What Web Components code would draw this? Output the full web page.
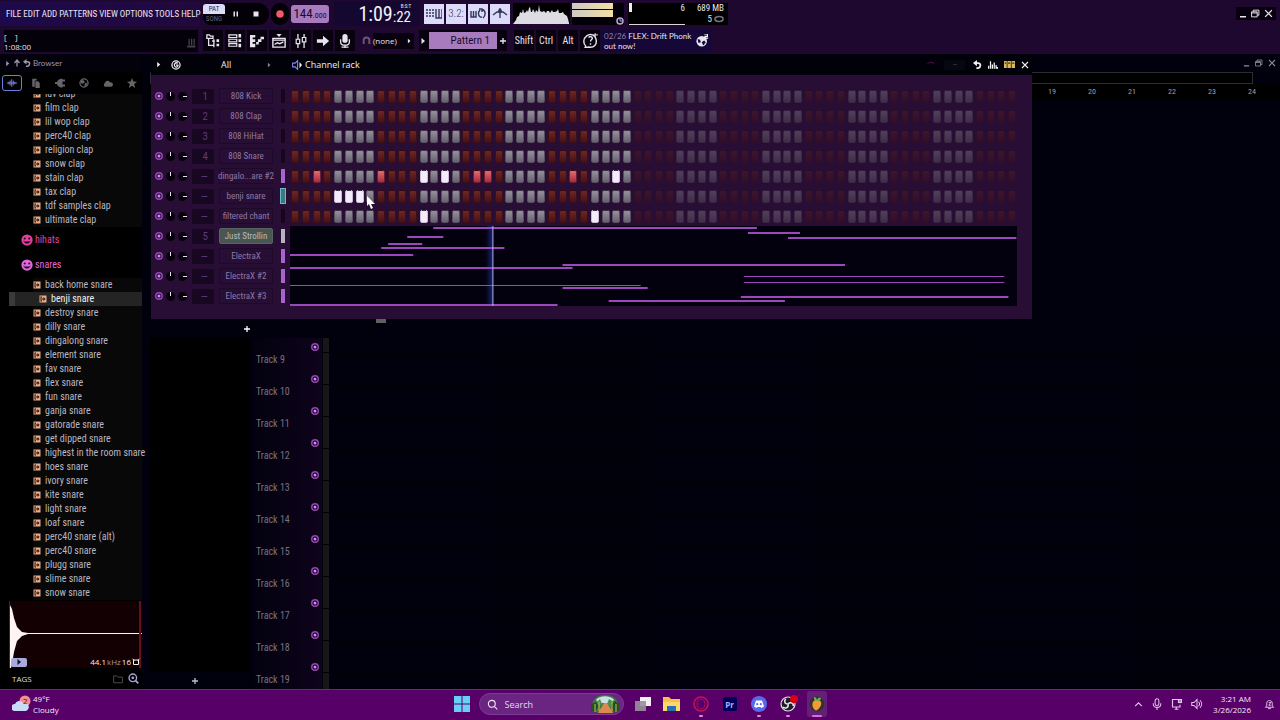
<!DOCTYPE html>
<html lang="en">
<head>
<meta charset="utf-8">
<title>Channel rack</title>
<style>
  body {
    margin: 0;
    background: #000;
    color: #ddd;
    font-family: "Roboto Condensed", "Roboto", sans-serif;
    font-size: 10px;
  }
</style>
</head>
<body>
<studio-app>
  <main-toolbar slot="toolbar"></main-toolbar>
  <sample-browser slot="browser"></sample-browser>
  <play-list slot="playlist"></play-list>
  <channel-rack slot="rack"></channel-rack>
  <task-bar slot="taskbar"></task-bar>
</studio-app>

<script>
const base = `
  * { box-sizing: border-box; }
  button, input, select {
    font: inherit; color: inherit; background: none; border: 0; padding: 0; margin: 0;
  }
  a { color: inherit; text-decoration: none; }
  svg { display: block; flex: none; }
`;

// 16x16 icons, drawn with currentColor
const icons = {
  right: '<path d="M5 2l7 6-7 6z" fill="currentColor"/>',
  up: '<path d="M8 15V4M3 8l5-6 5 6" fill="none" stroke="currentColor" stroke-width="2.5"/>',
  undo: '<path d="M7 0L0 5.500 7 11z" fill="currentColor"/><path d="M4 5.500h5c6 0 5 8 0 9H6" fill="none" stroke="currentColor" stroke-width="3.200"/>',
  wave: '<path d="M0 8h16M3 6v4M5 4v8M7.500 2v12M10 4v8M12.500 6v4" stroke="currentColor" stroke-width="1.400"/>',
  files: '<path d="M2 1h7v3H6v10H2z" fill="currentColor"/><path d="M7 5h4l3 3v8H7z" fill="currentColor"/>',
  plug: '<path d="M10 4h6M10 12h6M0 8h5" stroke="currentColor" stroke-width="3"/><path d="M12 1v14H9C5 14 3 11 3 8s2-6 6-7z" fill="currentColor"/>',
  globe: '<circle cx="8" cy="8" r="6.500" fill="none" stroke="currentColor" stroke-width="2"/><path d="M3 3l5 1 1 3-3 2-3-1zM9 9l4-2-1 5-3 2z" fill="currentColor"/>',
  cloud: '<path d="M3 14a3.500 3.500 0 0 1 0-6 4.500 4.500 0 0 1 8.500-1A3.500 3.500 0 0 1 13 14z" fill="currentColor"/>',
  star: '<path d="M8 0l2.200 5.500L16 6l-4.500 3.700L13 16l-5-3.500L3 16l1.500-6.300L0 6l5.800-.5z" fill="currentColor"/>',
  pause: '<path d="M3 3h3v10H3zM9 3h3v10H9z" fill="currentColor"/>',
  stop: '<path d="M3 3h10v10H3z" fill="currentColor"/>',
  rec: '<circle cx="8" cy="8" r="6" fill="#f25a66"/>',
  tree: '<path d="M1 1h3l1 1.500h3V5H1zM3 5v8h6M7 8h3M9 6v9" fill="none" stroke="currentColor" stroke-width="1.500"/><path d="M12 6h3v3h-3zM12 11h3v3h-3z" fill="currentColor"/>',
  rack: '<path d="M1 1h9v3H1zM1 6h9v3H1zM1 11h9v3H1z" fill="none" stroke="currentColor" stroke-width="1.400"/><path d="M12 0h3v4h-3zM12 6h3v3h-3zM12 11h3v4h-3z" fill="currentColor"/>',
  roll: '<path d="M0 1h6v3H3v2h3v3H3v2h3v4H0zM7 9h3v3H7zM9 6h4v3H9zM12 3h4v3h-4z" fill="currentColor"/>',
  play: '<path d="M5 0h6L8 3.500z" fill="currentColor"/><path d="M1 5h14v10H1zM1 7h14" fill="none" stroke="currentColor" stroke-width="1.600"/><path d="M3 12l3-2 3 1 4-2" fill="none" stroke="currentColor" stroke-width="1.600"/>',
  mixer: '<path d="M4.500 0v16M11.500 0v16" stroke="currentColor" stroke-width="1.500"/><path d="M2.500 6h4v5h-4zM9.500 4h4v5h-4z" fill="#08010e" stroke="currentColor" stroke-width="1.400"/>',
  arrow: '<path d="M1 6h7V2l7 6-7 6v-4H1z" fill="currentColor"/>',
  mic: '<rect x="5" y="0" width="6" height="10" rx="3" fill="currentColor"/><path d="M3 6v3c0 5 10 5 10 0V6M8 13v3M4 15h8" fill="none" stroke="currentColor" stroke-width="1.500"/>',
  magnet: '<path d="M3 14V7c0-6 10-6 10 0v7" fill="none" stroke="currentColor" stroke-width="3.500"/>',
  plus: '<path d="M8 2v12M2 8h12" stroke="currentColor" stroke-width="2.600"/>',
  keys: '<path d="M0 4h9M0 7h9M0 10h9" stroke="currentColor" stroke-width="1.600" stroke-dasharray="2 1"/><path d="M10 3v9h6V3M13 3v9" fill="none" stroke="currentColor" stroke-width="1.400"/>',
  loop: '<path d="M1 5v6h5V5M3.500 5v6" fill="none" stroke="currentColor" stroke-width="1.400"/><path d="M10 4c-3 3-1 8 2 7M12 3c4 2 4 6 1 9M9 3h3v3" fill="none" stroke="currentColor" stroke-width="1.400"/>',
  slide: '<path d="M8 2v10M1 9l4-3h6l4 3" fill="none" stroke="currentColor" stroke-width="1.400"/><circle cx="8" cy="5" r="2" fill="currentColor"/>',
  help: '<path d="M3 14l-1 2 4-1c6 1 9-3 8-8S8 0 4 3s-4 8-1 11zM6 5c1-2 4-1 4 .5S8 7 8 9M8 11v1.500" fill="none" stroke="currentColor" stroke-width="1.500"/><path d="M13 0v4M11 2h5" stroke="currentColor"/>',
  world: '<circle cx="7" cy="9" r="6.500" fill="currentColor"/><path d="M2 6l3 1 1 3-3 1zM7 10l3-2 2 2-3 4z" fill="#120840"/><path d="M10 0h4v3h-3v2h4" fill="none" stroke="#fff" stroke-width="1.400"/>',
  min: '<path d="M2 12h12v3H2z" fill="currentColor"/>',
  restore: '<path d="M1 5h10v9H1zM4 5V2h10v9h-3M1 7h10" fill="none" stroke="currentColor" stroke-width="1.700"/>',
  close: '<path d="M2 2l12 12M14 2L2 14" stroke="currentColor" stroke-width="2.200"/>',
  gauge: '<circle cx="8" cy="8" r="6" fill="none" stroke="currentColor" stroke-width="3"/><path d="M8 8V3M8 8h4" stroke="currentColor" stroke-width="2"/>',
  target: '<circle cx="8" cy="8" r="6.500" fill="none" stroke="currentColor" stroke-width="2"/><path d="M11 5c-4-2-7 2-5 5s6 1 5-2H8" fill="none" stroke="currentColor" stroke-width="2"/>',
  speaker: '<path d="M1 5h4l4-4v14l-4-4H1z" fill="none" stroke="#8088ff" stroke-width="1.700"/><path d="M12 3l4 5-4 5z" fill="currentColor"/>',
  bars: '<path d="M1 14V9M4 14V2M7 14V7M10 14V4M13 14V8M15 14v-3" stroke="currentColor" stroke-width="2"/>',
  steps: '<path d="M0 3h4v10H0zM5 3h5v10H5zM11 3h5v10h-5z" fill="currentColor"/><path d="M1 6h2M6 6h3M12 6h3" stroke="#402c00" stroke-width="1.500"/>',
  led: '<circle cx="8" cy="8" r="6.500" fill="none" stroke="#9446b4" stroke-width="3"/><circle cx="8" cy="8" r="3" fill="#d28af0"/>',
  sample: '<path d="M1 1h14v14H1z" fill="#e8aa88"/><path d="M3 3h3v2H5v6h1v2H3zM6 7h3V4l4 4-4 4V9H6z" fill="#2a1408"/>',
  smile: '<circle cx="8" cy="8" r="7.500" fill="currentColor"/><circle cx="5" cy="6" r="1.400" fill="#200818"/><circle cx="11" cy="6" r="1.400" fill="#200818"/><path d="M3 9c2 5 8 5 10 0l-2 1H5z" fill="#200818"/>',
  folder: '<path d="M1 3h5l2 2h7v9H1z" fill="none" stroke="currentColor" stroke-width="1.400"/>',
  zoom: '<circle cx="7" cy="7" r="5.500" fill="none" stroke="currentColor" stroke-width="2"/><path d="M11 11l4 4" stroke="currentColor" stroke-width="2.500"/><circle cx="7" cy="7" r="2" fill="currentColor"/>',
  chevron: '<path d="M2 11l6-6 6 6" fill="none" stroke="currentColor" stroke-width="2"/>',
  trayMic: '<rect x="5.500" y="1" width="5" height="9" rx="2.500" fill="none" stroke="currentColor" stroke-width="1.400"/><path d="M3 7v1c0 6 10 6 10 0V7M8 13v3" fill="none" stroke="currentColor" stroke-width="1.400"/>',
  net: '<path d="M10 2H2v10h10V9M5 15h5M7 12v3M12 2v5M10 2h4v4h-4z" fill="none" stroke="currentColor" stroke-width="1.500"/>',
  sound: '<path d="M1 6h3l4-4v12l-4-4H1zM10 5c2 2 2 4 0 6M12 3c3 3 3 7 0 10" fill="none" stroke="currentColor" stroke-width="1.400"/>',
  bell: '<path d="M2 12h12l-2-2V6c0-5-8-5-8 0v4zM6 14h4M7 5h3l-3 4h3" fill="none" stroke="currentColor" stroke-width="1.400"/>',
  search: '<circle cx="7" cy="7" r="5" fill="none" stroke="currentColor" stroke-width="1.600"/><path d="M11 11l4 4" stroke="currentColor" stroke-width="1.600"/>',
  shape: '<path d="M3 4h10v9H3zM1 2l4 3M15 2l-4 3" fill="none" stroke="currentColor" stroke-width="2"/>',
  metro: '<path d="M4 1h2v10H4zM8 1h2v10H8zM12 1h2v10h-2zM2 12h13v3H2z" fill="currentColor"/>',
  ring: '<ellipse cx="8" cy="8" rx="6.500" ry="4" fill="none" stroke="currentColor" stroke-width="2.500"/>'
};

const icon = (name, size = 12) =>
  `<svg width="${size}" height="${size}" viewBox="0 0 16 16" aria-hidden="true">${icons[name]}</svg>`;

class StudioElement extends HTMLElement {
  constructor() {
    super();
    this.attachShadow({ mode: 'open' });
  }

  connectedCallback() {
    this.shadowRoot.innerHTML = `<style>${base}${this.styles()}</style>${this.markup()}`;
  }

  styles() { return ''; }
  markup() { return ''; }
}

class StudioApp extends StudioElement {
  styles() {
    return `
      :host {
        display: grid;
        grid-template: auto minmax(0, 1fr) auto / auto minmax(0, 1fr);
        height: 100vh;
        overflow: hidden;
      }
      .toolbar, .taskbar { grid-column: 1 / -1; }
      .browser { display: flex; min-height: 0; }
      .desktop { position: relative; display: flex; min-height: 0; }
      /* the rack floats over the playlist */
      .rack { position: absolute; top: 0; left: 1px; width: 78%; }
    `;
  }

  markup() {
    return `
      <div class="toolbar"><slot name="toolbar"></slot></div>
      <div class="browser"><slot name="browser"></slot></div>
      <div class="desktop">
        <slot name="playlist"></slot>
        <div class="rack"><slot name="rack"></slot></div>
      </div>
      <div class="taskbar"><slot name="taskbar"></slot></div>
    `;
  }
}

class MainToolbar extends StudioElement {
  styles() {
    return `
      :host { display: block; background: #1e0830; color: #e8e4ee; height: 54px; }
      .row { display: flex; align-items: center; height: 27px; }
      .menu {
        display: flex; align-items: center; gap: 2px; width: 200px; height: 25px; padding-left: 6px;
        background: linear-gradient(90deg, #1c0a4c, #22083c); font-size: 9px;
      }
      .menu button { white-space: nowrap; }
      .transport {
        display: flex; align-items: center; gap: 7px; width: 66px; height: 22px; margin-left: 3px;
        background: #040008; border-radius: 8px 11px 11px 8px;
      }
      .mode { display: grid; width: 22px; height: 20px; font-size: 7px; line-height: 10px; text-align: center; }
      .mode button:first-child { background: #dcdcfa; color: #302850; border-radius: 3px 3px 0 0; }
      .mode button:last-child { color: #675f70; }
      .transport > button { width: 13px; }
      .record { display: grid; place-items: center; width: 18px; height: 22px; margin: 0 2px; background: #040008; border-radius: 9px; }
      .tempo { width: 38px; height: 18px; background: #a77bbd; color: #1c0a28; border-radius: 3px; font-size: 13px; line-height: 18px; text-align: center; }
      .tempo small { font-size: 8px; }
      .clock { display: flex; align-items: flex-end; justify-content: flex-end; width: 86px; height: 25px; margin: 0 4px 0 5px; background: #150830; font-size: 20px; line-height: 24px; padding-right: 9px; color: #f4f2f8; }
      .clock div { display: grid; justify-items: end; }
      .clock small { font-size: 15px; line-height: 17px; }
      .clock sup { font-size: 5px; line-height: 6px; }
      .tiles { display: flex; gap: 2px; }
      .tiles button { display: grid; place-items: center; width: 20px; height: 20px; background: #dcdcfa; color: #34345c; font-size: 11px; font-weight: 300; }
      .scope { margin-left: 3px; background: #000; }
      .meter { display: flex; flex-direction: column; gap: 1px; margin-left: 2px; width: 52px; height: 22px; background: #04000a; }
      .meter i { width: 41px; height: 7px; background: linear-gradient(90deg, #cfcac2, #f2dfa4); }
      .meter svg { align-self: flex-end; color: #b8a8d4; margin-top: -1px; }
      .usage { display: grid; grid-template-columns: 56px 1fr; width: 100px; height: 22px; margin-left: 4px; padding: 0 4px 0 1px; background: #000; font-size: 9px; line-height: 11px; text-align: right; }
      .graph { display: flex; justify-content: space-between; grid-row: span 2; border-bottom: 1px solid #d8d8d8; }
      .graph i { width: 3px; height: 9px; background: #eee; }
      .count { display: flex; align-items: center; justify-content: flex-end; gap: 2px; }
      .count svg { color: #77737c; }
      .window { display: flex; gap: 4px; height: 13px; margin: 0 4px 0 auto; padding: 0 3px; align-items: center; background: #08000e; }
      .hint { display: flex; justify-content: space-between; align-items: flex-end; width: 194px; height: 22px; margin: 0 5px 0 4px; padding-right: 2px; background: #04010a; font: 8px/10px "Open Sans", sans-serif; }
      .hint svg { color: #444; margin-bottom: 4px; }
      .views { display: flex; gap: 2px; }
      .views button, .keys button { display: grid; place-items: center; width: 20px; height: 21px; background: #08010e; }
      .snap { display: flex; align-items: center; gap: 2px; margin-left: 7px; font: 8px "Open Sans", sans-serif; }
      .snap > svg { color: #665870; }
      .snap button { display: flex; align-items: center; justify-content: space-between; width: 41px; height: 16px; padding: 0 2px 0 0; background: #08010e; }
      .pattern { display: flex; align-items: center; margin: 0 7px 0 5px; background: #08010e; height: 21px; }
      .pattern .name { width: 68px; height: 17px; margin: 0 2px; padding-right: 7px; background: #a77bbd; color: #1c0a28; text-align: right; font-size: 11px; }
      .keys { display: flex; gap: 2px; font-size: 10px; }
      .news { display: flex; align-items: center; justify-content: space-between; width: 110px; height: 22px; margin-left: 1px; padding: 0 2px 0 3px; background: #150838; font: 8px/10px Lato, sans-serif; white-space: nowrap; }
      .news span { color: #8f84a8; }
    `;
  }

  markup() {
    const menu = ['FILE', 'EDIT', 'ADD', 'PATTERNS', 'VIEW', 'OPTIONS', 'TOOLS', 'HELP'];
    const views = ['tree', 'rack', 'roll', 'play', 'mixer', 'arrow', 'mic'];
    return `
      <div class="row">
        <nav class="menu">${menu.map(m => `<button>${m}</button>`).join('')}</nav>
        <div class="transport">
          <div class="mode"><button>PAT</button><button>SONG</button></div>
          <button aria-label="Pause">${icon('pause', 8)}</button>
          <button aria-label="Stop">${icon('stop', 8)}</button>
        </div>
        <button class="record" aria-label="Record">${icon('rec', 10)}</button>
        <button class="tempo">144<small>.000</small></button>
        <div class="clock"><span>1:09</span><div><sup>B:S:T</sup><small>:22</small></div></div>
        <div class="tiles">
          <button aria-label="Typing keyboard">${icon('keys', 16)}</button>
          <button>3.2:</button>
          <button aria-label="Loop record">${icon('loop', 16)}</button>
          <button aria-label="Slide">${icon('slide', 16)}</button>
        </div>
        <svg class="scope" width="57" height="21" viewBox="0 0 57 21" aria-hidden="true">
          <path fill="#dcdce2" d="M0 21l3-4 1-3 2-1 1-4 2 1 1-4 1 4 2-1 1-2 1 2 1-4 1-1 1 5 1 0 1-3 2 4 1-3 2 2 1-7 1 6 2 1 2-1 2 2 1-2 2 0 1 2 2-3 1 2 2 0 2-1 1-2 1 4 2 0 2-1 1 2 3 2 1 3 1 4v3z"/>
        </svg>
        <div class="meter"><i></i><i></i>${icon('gauge', 8)}</div>
        <div class="usage">
          <div class="graph"><i></i><span>6</span></div>
          <span>689 MB</span>
          <span class="count">5${icon('ring', 10)}</span>
        </div>
        <div class="window">
          <button aria-label="Minimize">${icon('min', 8)}</button>
          <button aria-label="Restore">${icon('restore', 9)}</button>
          <button aria-label="Close">${icon('close', 9)}</button>
        </div>
      </div>
      <div class="row">
        <div class="hint"><div>[ &nbsp; &nbsp;]<br>1:08:00</div>${icon('metro', 10)}</div>
        <div class="views">${views.map(v => `<button aria-label="${v}">${icon(v, 14)}</button>`).join('')}</div>
        <div class="snap">${icon('magnet', 9)}<button>(none)${icon('right', 6)}</button></div>
        <div class="pattern">${icon('right', 8)}<button class="name">Pattern 1</button>${icon('plus', 8)}</div>
        <div class="keys">
          <button>Shift</button><button>Ctrl</button><button>Alt</button>
          <button aria-label="Help">${icon('help', 15)}</button>
        </div>
        <a class="news" href="#news"><div><span>02/26</span> FLEX: Drift Phonk<br>out now!</div>${icon('world', 13)}</a>
      </div>
    `;
  }
}

class SampleItem extends StudioElement {
  styles() {
    return `
      :host { display: block; flex: none; padding-left: 33px; }
      button { display: flex; align-items: center; gap: 4px; width: 100%; height: 14px; line-height: 14px; background: #080808; color: #bab6c0; white-space: nowrap; }
      :host([selected]) { padding-left: 9px; }
      :host([selected]) button { padding-left: 24px; border-left: 6px solid #3a3a3a; background: #242424; color: #f0f0f0; }
    `;
  }

  markup() {
    return `<button>${icon('sample', 8)}<slot></slot></button>`;
  }
}

class SampleBrowser extends StudioElement {
  styles() {
    return `
      :host { display: flex; flex-direction: column; width: 142px; min-height: 0; padding-right: 8px; background: linear-gradient(270deg, #01010d 8px, #000 8px); }
      header { display: flex; align-items: center; gap: 2px; height: 18px; padding-left: 4px; background: #02010c; color: #9c98a4; font: 8px Lato, sans-serif; }
      nav { display: flex; align-items: center; gap: 4px; height: 21px; padding-left: 2px; color: #67656c; }
      nav button { display: grid; place-items: center; width: 20px; height: 16px; border-radius: 3px; }
      nav button:first-child { border: 1px solid #6a7ee0; color: #7e8cf8; }
      /* long names run on into the gutter */
      .list { display: flex; flex-direction: column; justify-content: flex-end; flex: 1; min-height: 0; margin: 1px -8px 0 0; padding-right: 8px; overflow: hidden; }
      .folder { display: flex; flex: none; align-items: center; gap: 2px; height: 25px; padding-left: 21px; color: #e0409c; }
      .folder:nth-of-type(2) { color: #e068dc; }
      .folder + sample-item { margin-top: 1px; }
      .preview { position: relative; height: 67px; margin: 1px 0 0 9px; border-left: 1px solid #70101c; background: #120002; }
      .preview svg.shape { width: 100%; height: 100%; }
      .preview div { position: absolute; inset: auto 2px 0 1px; display: flex; align-items: center; justify-content: space-between; height: 12px; font: 8px/12px "Open Sans", sans-serif; color: #f0f0f0; }
      .preview button { display: grid; place-items: center; width: 16px; height: 9px; border-radius: 2px; background: #a9aadc; color: #101030; }
      .preview span { display: flex; align-items: center; gap: 1px; }
      .preview em { font-style: normal; color: #a0989c; }
      footer { display: flex; align-items: center; gap: 5px; height: 21px; padding: 0 3px 0 12px; font: 8px "Open Sans", sans-serif; color: #ddd; }
      footer span { margin-right: auto; }
      footer svg:first-of-type { color: #55505a; }
      footer svg:last-of-type { color: #a0a6d4; }
    `;
  }

  markup() {
    const claps = ['luv clap', 'film clap', 'lil wop clap', 'perc40 clap', 'religion clap', 'snow clap', 'stain clap', 'tax clap', 'tdf samples clap', 'ultimate clap'];
    const snares = ['back home snare', 'benji snare', 'destroy snare', 'dilly snare', 'dingalong snare', 'element snare', 'fav snare', 'flex snare', 'fun snare', 'ganja snare', 'gatorade snare', 'get dipped snare', 'highest in the room snare', 'hoes snare', 'ivory snare', 'kite snare', 'light snare', 'loaf snare', 'perc40 snare (alt)', 'perc40 snare', 'plugg snare', 'slime snare', 'snow snare'];
    const items = names => names.map(n =>
      `<sample-item${n === 'benji snare' ? ' selected' : ''}>${n}</sample-item>`).join('');
    const tabs = ['wave', 'files', 'plug', 'globe', 'cloud', 'star'];
    return `
      <header>${icon('right', 7)}${icon('up', 8)}${icon('undo', 8)}<span>Browser</span></header>
      <nav>${tabs.map(t => `<button aria-label="${t}">${icon(t, 10)}</button>`).join('')}</nav>
      <div class="list">
        ${items(claps)}
        <div class="folder">${icon('smile', 12)}hihats</div>
        <div class="folder">${icon('smile', 12)}snares</div>
        ${items(snares)}
      </div>
      <div class="preview">
        <svg class="shape" viewBox="0 0 132 67" preserveAspectRatio="none" aria-hidden="true">
          <path d="M0 4l2 4 2 9 3 9 5 5 6 1h114v1H18l-6 2-5 5-3 11-2 12-2 8z" fill="#fff4f4"/>
          <path d="M129 0h2v67h-2z" fill="#6a0e18"/>
        </svg>
        <div><button aria-label="Play">${icon('right', 8)}</button><span>44.1 <em>kHz</em> 16 ${icon('shape', 8)}</span></div>
      </div>
      <footer><span>TAGS</span>${icon('folder', 10)}${icon('zoom', 11)}</footer>
    `;
  }
}

class PlayList extends StudioElement {
  styles() {
    return `
      :host { display: flex; flex: 1; flex-direction: column; min-width: 0; background: #01010d; }
      header { display: flex; justify-content: flex-end; gap: 5px; align-items: center; height: 18px; padding-right: 4px; color: #8c8894; }
      .scroll { height: 12px; margin-right: 27px; border: 1px solid #2c2c34; background: #000; }
      .ruler { display: flex; justify-content: flex-end; height: 15px; padding-right: 8px; background: #000; color: #a09ca6; line-height: 15px; font-size: 8px; }
      .ruler span { width: 40px; text-align: center; }
      .head { display: flex; justify-content: center; align-items: flex-end; width: 194px; height: 239px; padding-bottom: 5px; color: #fff; }
      .body { display: flex; flex: 1; min-height: 0; }
      .picker { display: flex; flex-direction: column; width: 100px; }
      .picker div { flex: 1; background: #000; }
      .picker button { display: grid; place-items: center; height: 17px; padding-right: 10px; color: #b8c4d0; }
      .tracks { width: 68px; margin-left: 4px; overflow: hidden; background: linear-gradient(90deg, #03010e, #0e041c); }
      .track { display: flex; justify-content: space-between; height: 32px; padding: 0 3px 0 2px; line-height: 14px; color: #77727e; }
      .track button { align-self: flex-end; padding-bottom: 2px; }
      .track:first-child { height: 15px; }
      .mutes { width: 10px; overflow: hidden; padding: 0 3px 0 1px; }
      .mutes i { display: block; height: 31px; margin-bottom: 1px; background: #171618; }
      .mutes i:first-child { height: 14px; }
      .grid {
        flex: 1;
        background:
          repeating-linear-gradient(180deg, transparent 0 14px, #000006 14px 15px, transparent 15px 32px),
          repeating-linear-gradient(90deg, #01010d 0 160px, #01010b 160px 320px);
      }
    `;
  }

  markup() {
    const tracks = ['', 'Track 9', 'Track 10', 'Track 11', 'Track 12', 'Track 13', 'Track 14', 'Track 15', 'Track 16', 'Track 17', 'Track 18', 'Track 19'];
    return `
      <header>${icon('min', 7)}${icon('restore', 8)}${icon('close', 8)}</header>
      <div class="scroll"></div>
      <div class="ruler">${[19, 20, 21, 22, 23, 24].map(n => `<span>${n}</span>`).join('')}</div>
      <div class="head"><button aria-label="Add track">${icon('plus', 8)}</button></div>
      <div class="body">
        <div class="picker"><div></div><button aria-label="Add pattern">${icon('plus', 8)}</button></div>
        <div class="tracks">
          ${tracks.map(t => `<div class="track"><span>${t}</span><button aria-label="Mute">${icon('led', 8)}</button></div>`).join('')}
        </div>
        <div class="mutes">${tracks.map(() => '<i></i>').join('')}</div>
        <div class="grid"></div>
      </div>
    `;
  }
}

class ChannelStrip extends StudioElement {
  styles() {
    return `
      :host { display: flex; align-items: center; height: 20px; }
      .knob { display: grid; place-items: start center; width: 9px; height: 9px; margin-left: 3px; border-radius: 50%; background: #08020e; }
      .knob::after { content: ""; width: 1px; height: 4px; background: #e4e0ea; }
      .vol { place-items: center end; }
      .vol::after { width: 4px; height: 1px; }
      .track { width: 22px; height: 15px; margin-left: 5px; padding-right: 6px; background: #170720; color: #5d3a7c; text-align: right; font-size: 11px; line-height: 15px; border-radius: 2px; }
      .name { display: flex; justify-content: center; align-items: center; width: 54px; height: 16px; margin-left: 5px; border: 1px solid #1d0a28; background: #260e34; color: #9079a4; border-radius: 2px; white-space: nowrap; font-size: 9px; }
      .select { width: 4px; height: 14px; margin-left: 8px; background: #16071e; }
      :host([lit]) .select { background: #a565cc; }
      :host([tone="white"]) .select { background: #b8b2c0; }
      :host([tone="cyan"]) .select { background: #3c7880; outline: 1px solid #70b8c8; }
      :host([tone="white"]) .name { background: #4a5652; color: #b4bcb8; border-color: #566460; }
    `;
  }

  markup() {
    return `
      <button aria-label="Mute">${icon('led', 8)}</button>
      <button class="knob" aria-label="Pan"></button>
      <button class="knob vol" aria-label="Volume"></button>
      <button class="track" aria-label="Mixer track">${this.getAttribute('track') || '—'}</button>
      <button class="name"><slot></slot></button>
      <button class="select" aria-label="Select"></button>
    `;
  }
}

class StepRow extends StudioElement {
  styles() {
    return `
      :host { display: grid; grid-template-columns: repeat(68, 1fr); align-items: center; justify-items: center; height: 20px; }
      button { width: 8px; height: 13px; border: 1px solid #3c1018; border-radius: 2px; background: linear-gradient(#6c2824, #481018); }
      button::before { content: ""; display: block; width: 4px; height: 1px; margin: -6px auto 0; background: #38080c; }
      .alt { border-color: #57505f; background: linear-gradient(#97919f, #67616f); }
      .alt::before { background: #38303f; }
      .on { background: linear-gradient(#e06c70, #a82c3c); border-color: #70202c; }
      .alt.on { background: #f4ecfa; border-color: #c8bcd4; }
      .off { opacity: 0.3; }
      .off.alt { opacity: 0.38; }
    `;
  }

  markup() {
    const on = (this.getAttribute('on') || '').split(' ').filter(Boolean).map(Number);
    let out = '';
    for (let i = 0; i < 68; i++) {
      const cls = [i % 8 > 3 ? 'alt' : '', on.includes(i) ? 'on' : '', i > 31 ? 'off' : ''].join(' ').trim();
      out += `<button class="${cls}" aria-label="Step ${i + 1}" aria-pressed="${on.includes(i)}"></button>`;
    }
    return out;
  }
}

class NotePreview extends StudioElement {
  styles() {
    return `
      :host { display: block; height: 80px; background: #03010e; }
      svg { width: 100%; height: 100%; }
    `;
  }

  markup() {
    // [y, start, end, thickness]
    const notes = [
      [1, 143, 466, 2], [6, 457, 509, 2], [10, 117, 153, 2], [11, 497, 725, 2], [17, 98, 132, 2],
      [21, 91, 214, 2], [28, 0, 123, 2], [38, 272, 554, 2], [41, 0, 282, 2], [50, 453, 713, 1],
      [56, 453, 713, 1], [59, 0, 350, 1], [61, 272, 357, 2], [70, 450, 717, 2], [74, 318, 494, 2], [78, 0, 267, 2]
    ];
    return `
      <svg viewBox="0 0 726 80" preserveAspectRatio="none" aria-hidden="true">
        <defs><linearGradient id="glow"><stop offset="0" stop-color="#2030a0" stop-opacity="0"/><stop offset="1" stop-color="#2838b0"/></linearGradient></defs>
        <rect x="195" width="7" height="80" fill="url(#glow)" opacity=".6"/>
        ${notes.map(([y, a, b, h]) => `<rect x="${a}" y="${y}" width="${b - a}" height="${h}" fill="#9c48bc"/>`).join('')}
        <rect x="202" width="1" height="80" fill="#b4b4ff"/>
      </svg>
    `;
  }
}

class ChannelRack extends StudioElement {
  styles() {
    return `
      :host { display: block; background: #280e34; }
      header { display: flex; align-items: center; height: 21px; padding: 0 3px 0 4px; background: #01010a; color: #f0f0f0; font: 9px "Open Sans", sans-serif; }
      .filter { display: flex; justify-content: space-between; width: 51px; margin: 0 20px 0 40px; align-items: center; }
      .filter svg { color: #88848c; }
      header > svg:first-child { margin-right: 9px; }
      h1 { display: flex; align-items: center; gap: 3px; margin: 0 auto 0 0; font: inherit; }
      .swing { width: 21px; height: 10px; background: #050810; text-align: center; line-height: 8px; color: #363c40; }
      .curve { width: 8px; height: 6px; margin-right: 9px; border-top: 1px solid #581048; border-radius: 50%; }
      .tools { display: flex; align-items: center; gap: 6px; margin-left: 8px; }
      .gold { color: #dcb858; }
      .body { display: flex; padding: 11px 15px 13px 4px; }
      .steps { flex: 1; min-width: 0; margin-left: 5px; }
      /* mouse pointer */
      .pointer { position: absolute; left: 216px; top: 142px; }
      .grip { position: absolute; top: 100%; left: 225px; width: 10px; height: 4px; background: #606064; }
    `;
  }

  markup() {
    return `
      <header>
        ${icon('right', 7)}${icon('target', 10)}
        <button class="filter">All${icon('right', 6)}</button>
        <h1>${icon('speaker', 10)}Channel rack</h1>
        <i class="curve"></i><span class="swing">–</span>
        <div class="tools">
          <button aria-label="Undo">${icon('undo', 9)}</button>
          <button aria-label="Graph editor">${icon('bars', 10)}</button>
          <button class="gold" aria-label="Step edit">${icon('steps', 11)}</button>
          <button aria-label="Close">${icon('close', 8)}</button>
        </div>
      </header>
      <div class="body">
        <div>
          <channel-strip track="1">808 Kick</channel-strip>
          <channel-strip track="2">808 Clap</channel-strip>
          <channel-strip track="3">808 HiHat</channel-strip>
          <channel-strip track="4">808 Snare</channel-strip>
          <channel-strip lit>dingalo...are #2</channel-strip>
          <channel-strip tone="cyan">benji snare</channel-strip>
          <channel-strip>filtered chant</channel-strip>
          <channel-strip track="5" tone="white">Just Strollin</channel-strip>
          <channel-strip lit>ElectraX</channel-strip>
          <channel-strip lit>ElectraX #2</channel-strip>
          <channel-strip lit>ElectraX #3</channel-strip>
        </div>
        <div class="steps">
          <step-row></step-row>
          <step-row></step-row>
          <step-row></step-row>
          <step-row></step-row>
          <step-row on="2 8 12 14 17 18 26 30"></step-row>
          <step-row on="4 5 6"></step-row>
          <step-row on="12 28"></step-row>
          <note-preview></note-preview>
        </div>
      </div>
      <svg class="pointer" width="9" height="13" viewBox="0 0 9 13" aria-hidden="true"><path d="M0 0v10l2-2 2 5 2-1-2-4h4z" fill="#fff"/></svg>
      <i class="grip"></i>
    `;
  }
}

class TaskBar extends StudioElement {
  styles() {
    return `
      :host { display: grid; grid-template-columns: 1fr auto 1fr; align-items: center; height: 31px; padding-bottom: 2px; box-sizing: border-box; border-top: 1px solid #6e2488; background: #560068; color: #f4e8f8; font: 8px/11px "Open Sans", sans-serif; }
      .weather { display: flex; align-items: center; gap: 2px; padding-left: 12px; }
      .apps { display: flex; align-items: center; gap: 9px; }
      .search { display: flex; align-items: center; width: 145px; height: 22px; padding: 0 3px 0 7px; gap: 7px; border: 1px solid #7c3c94; border-radius: 11px; background: #6a2482; }
      .search input { flex: 1; min-width: 0; outline: 0; font-size: 9px; }
      .search input::placeholder { color: #e4d8ea; opacity: 1; }
      .apps a { display: grid; justify-items: center; align-content: center; position: relative; width: 20px; height: 26px; }
      .apps a.open::after { content: ""; position: absolute; bottom: 0; width: 4px; height: 2px; border-radius: 1px; background: #d88cd8; }
      .apps a.active { border-radius: 3px; background: #642078; }
      .apps a.active::after { width: 10px; background: #e468dc; }
      .pr { display: grid; place-items: center; width: 14px; height: 14px; border-radius: 2px; background: #00005b; color: #b0b0ff; font-weight: 700; font-size: 8px; }
      .tray { display: flex; justify-content: flex-end; align-items: center; gap: 8px; padding-right: 5px; }
      .tray time { text-align: right; margin: 0 5px 0 2px; }
      .tray svg { color: #e0c8e8; }
    `;
  }

  markup() {
    return `
      <div class="weather">
        <svg width="19" height="18" viewBox="0 0 19 18" aria-hidden="true">
          <circle cx="13" cy="6" r="5.500" fill="#f09090"/>
          <path d="M3 16a3.500 3.500 0 0 1 0-7 4.500 4.500 0 0 1 8-1 4 4 0 0 1 3 8z" fill="#c8dcfa"/>
          <text x="11" y="9" font-size="8" fill="#401020">2</text>
        </svg>
        <div>49°F<br>Cloudy</div>
      </div>
      <div class="apps">
        <button aria-label="Start">
          <svg width="16" height="16" viewBox="0 0 16 16"><path fill="#68d0f4" d="M0 0h7.500v7.500H0zM8.500 0H16v7.500H8.500zM0 8.500h7.500V16H0zM8.500 8.500H16V16H8.500z"/></svg>
        </button>
        <label class="search">${icon('search', 11)}
          <input type="text" placeholder="Search" aria-label="Search">
          <svg width="30" height="18" viewBox="0 0 30 18" aria-hidden="true">
            <path d="M2 10C3 3 8 0 15 0s12 3 13 9v7c-8 3-18 3-26 0z" fill="#3c7848"/>
            <path d="M6 5c3-5 15-5 18 0l-3 3H9z" fill="#c8e0e4"/>
            <path d="M10 4l2 5-3 3-3-4zM19 4l-2 5 4 3 3-5z" fill="#4c9050"/>
            <path d="M14 8h3l6 10H8z" fill="#dc8850"/>
            <path d="M1 9l5-2 3 4-4 6-4-1zM21 10l4-4 4 3v7l-5 1z" fill="#205028"/>
            <path d="M5 9v8M9 7v9M22 7v9M26 9v8" stroke="#d0b848"/>
          </svg>
        </label>
        <a href="#desktops" aria-label="Task view"><svg width="16" height="16" viewBox="0 0 16 16"><path d="M5 1h11v9H5z" fill="#f0f0f0"/><path d="M0 5h11v10H0z" fill="#98909c" opacity=".9"/></svg></a>
        <a href="#files" aria-label="Files"><svg width="17" height="16" viewBox="0 0 17 16"><path d="M0 1h6l2 2h9v12H0z" fill="#f4c048"/><path d="M0 6h17v9H0z" fill="#fcd86c"/><path d="M4 10h9v5H4z" fill="#2470bc"/></svg></a>
        <a class="open" href="#opera" aria-label="Opera GX"><svg width="16" height="16" viewBox="0 0 16 16"><circle cx="8" cy="8" r="7" fill="none" stroke="#c81058" stroke-width="1.500"/><ellipse cx="8" cy="8" rx="4" ry="5" fill="none" stroke="#b01058"/></svg></a>
        <a href="#premiere"><span class="pr">Pr</span></a>
        <a class="open" href="#discord" aria-label="Discord"><svg width="16" height="16" viewBox="0 0 16 16"><circle cx="8" cy="8" r="8" fill="#5868ec"/><path d="M5 4.500h6l2 6-2.500 1.500-1-1h-3l-1 1L3 10.500z" fill="#fff"/><circle cx="6.200" cy="8.200" r="1.100" fill="#5868ec"/><circle cx="9.800" cy="8.200" r="1.100" fill="#5868ec"/></svg></a>
        <a class="open" href="#obs" aria-label="OBS"><svg width="20" height="18" viewBox="0 0 20 18"><circle cx="10" cy="9" r="7" fill="#201c24" stroke="#e4e0e8" stroke-width="1.200"/><path d="M10 9c-4 0-4-4-2-5M10 9c3-3 6 0 5 2M10 9c1 4-3 5-5 3" fill="none" stroke="#e4e0e8" stroke-width="1.600"/><circle cx="16" cy="4" r="4" fill="#d80010"/></svg></a>
        <a class="open active" href="#studio" aria-label="FL Studio"><svg width="16" height="16" viewBox="0 0 16 16"><circle cx="8" cy="8" r="7.500" fill="#30342c"/><path d="M8 4c5 0 5 4 3 7s-4 4-5 3-4-4-2-8c1-2 3-2 4-2z" fill="#f49838"/><path d="M8 5c0-3 2-4 4-3 0 2-2 3-4 3zM8 5C5 5 5 3 5 1c2 0 3 2 3 4z" fill="#68b848"/></svg></a>
      </div>
      <div class="tray">
        ${icon('chevron', 9)}${icon('trayMic', 12)}${icon('net', 12)}${icon('sound', 12)}
        <time>3:21 AM<br>3/26/2026</time>
        ${icon('bell', 11)}
      </div>
    `;
  }
}

customElements.define('studio-app', StudioApp);
customElements.define('main-toolbar', MainToolbar);
customElements.define('sample-item', SampleItem);
customElements.define('sample-browser', SampleBrowser);
customElements.define('play-list', PlayList);
customElements.define('channel-strip', ChannelStrip);
customElements.define('step-row', StepRow);
customElements.define('note-preview', NotePreview);
customElements.define('channel-rack', ChannelRack);
customElements.define('task-bar', TaskBar);
</script>
</body>
</html>
